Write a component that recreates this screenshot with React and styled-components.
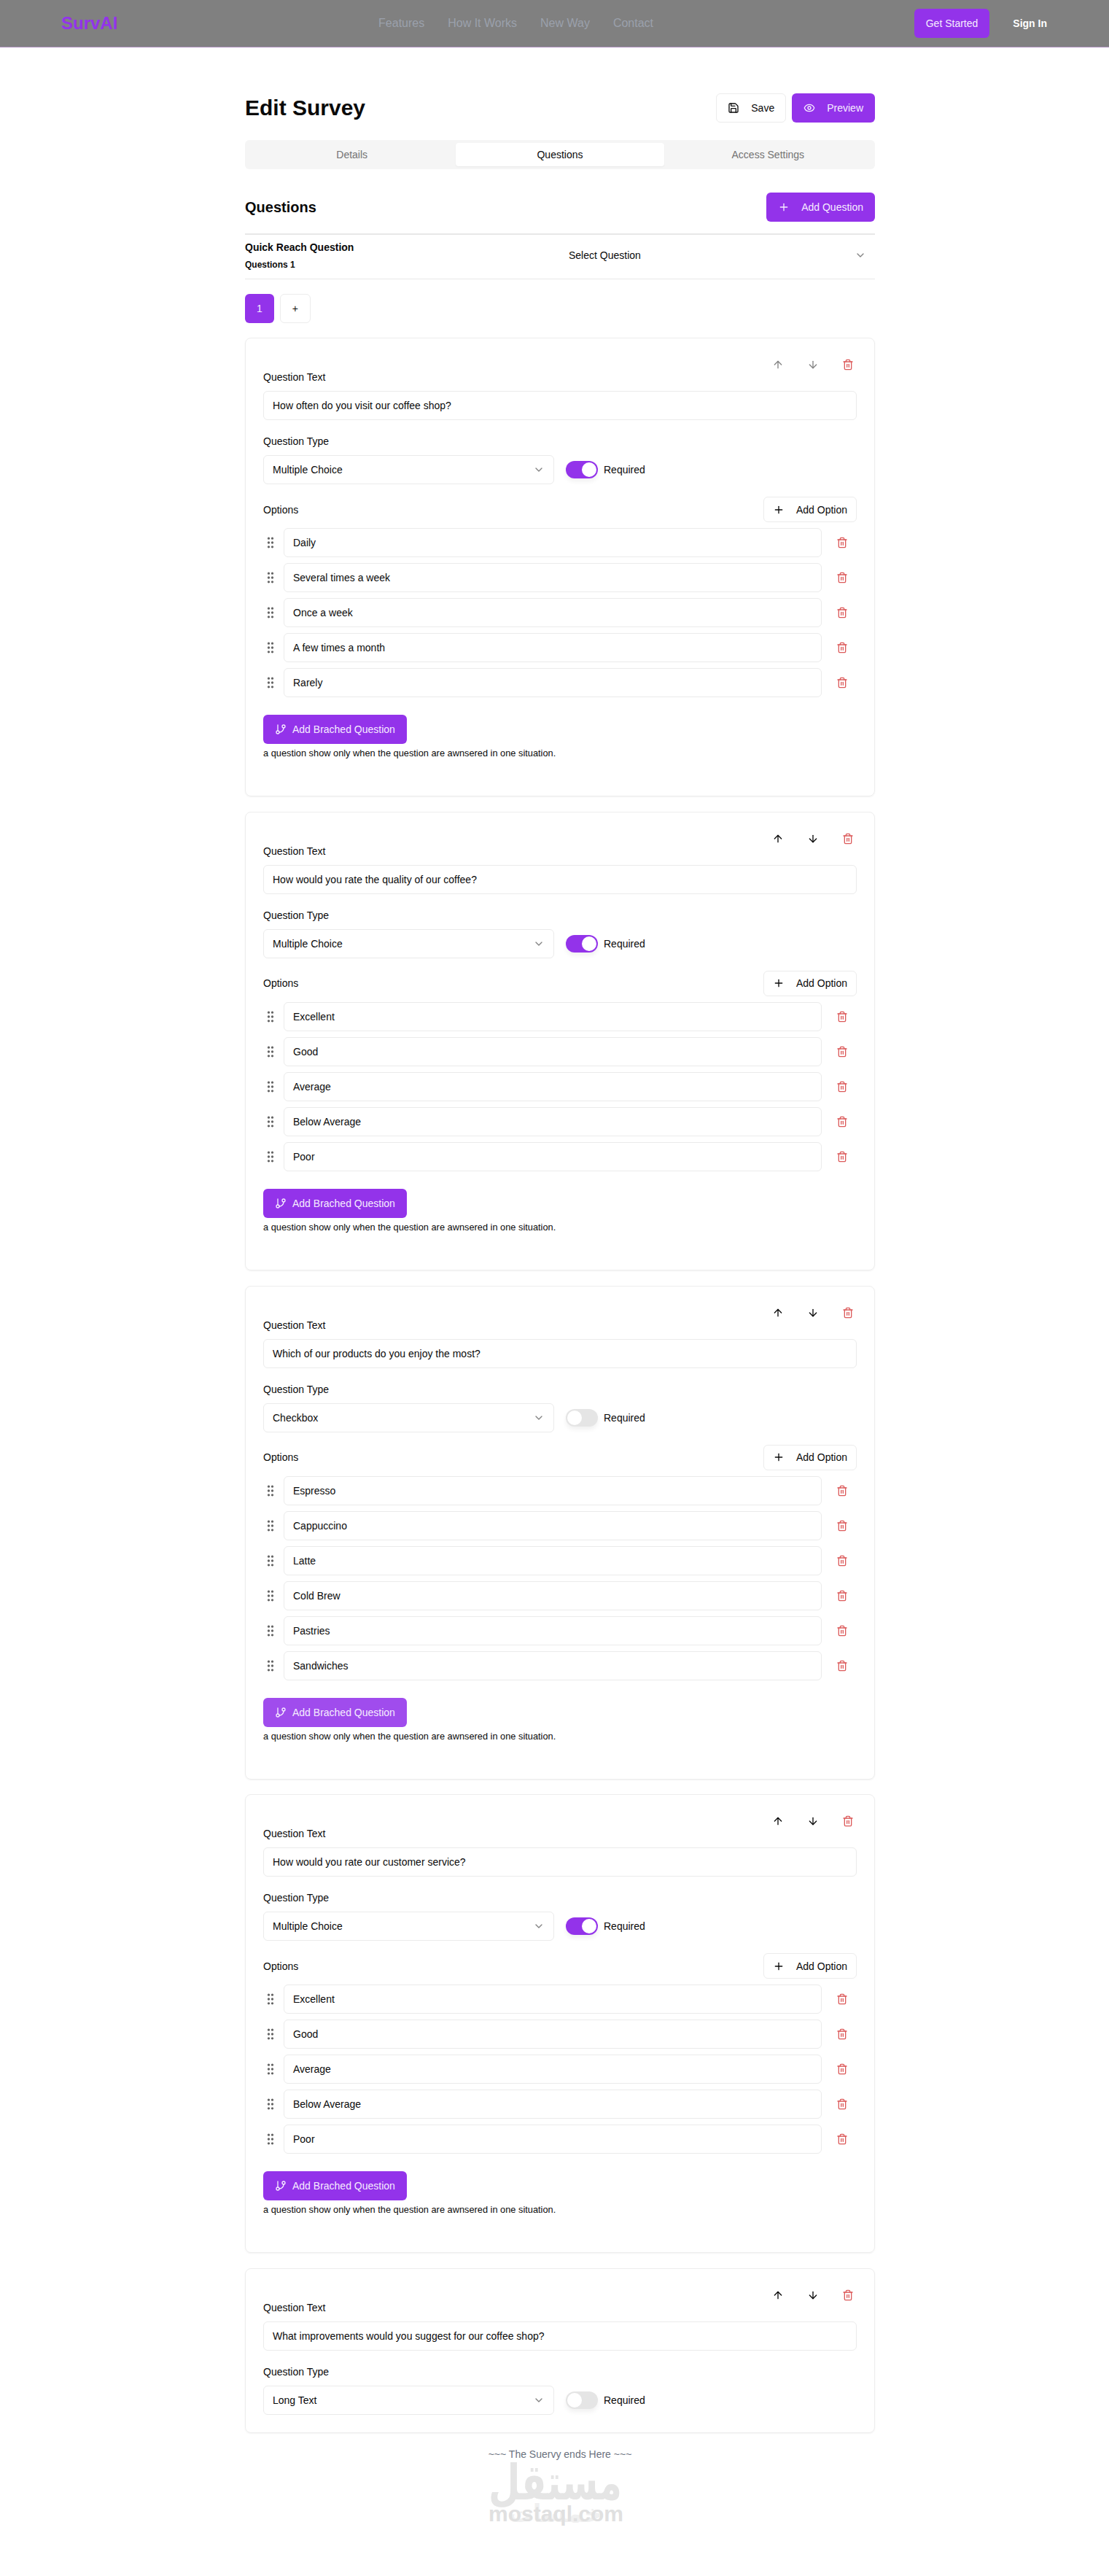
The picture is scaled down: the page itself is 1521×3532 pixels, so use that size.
import React from 'react';
import styled, { createGlobalStyle } from 'styled-components';
import { ArrowUp, ArrowDown, Trash2, ChevronDown, Plus, Save, Eye, GripVertical, GitBranch } from 'lucide-react';

const Global = createGlobalStyle`
  html, body {
    margin: 0;
    padding: 0;
    background: #fff;
    font-family: "Liberation Sans", Arial, sans-serif;
    color: #0a0a0a;
    overflow-x: hidden;
  }
  * { box-sizing: border-box; }
`;

const purple = '#9333ea';
const onPurple = '#f6ecff';

const Header = styled.header`
  height: 65px;
  background: #808080;
  border-bottom: 1px solid #a68fb6;
  box-shadow: 0 1px 0 #fdf4ff;
  display: flex;
  align-items: center;
  justify-content: space-between;
  padding: 0 69px 0 84px;
`;
const Logo = styled.div`
  color: ${purple};
  font-size: 24px;
  font-weight: 700;
`;
const NavLinks = styled.nav`
  display: flex;
  gap: 32px;
`;
const NavLink = styled.a`
  color: #9ba1ac;
  font-size: 16px;
`;
const HeaderActions = styled.div`
  display: flex;
  align-items: center;
  gap: 16px;
`;
const SignIn = styled.a`
  color: #fff;
  font-size: 14px;
  font-weight: 700;
  padding: 0 16px;
`;

const Main = styled.main`
  width: 864px;
  margin-left: 336px;
  padding: 63px 0 157px;
`;
const TitleRow = styled.div`
  display: flex;
  align-items: center;
  justify-content: space-between;
  height: 40px;
`;
const Title = styled.h1`
  margin: 0;
  font-size: 30px;
  line-height: 36px;
  font-weight: 700;
`;
const Buttons = styled.div`
  display: flex;
  gap: 8px;
`;
const Button = styled.button`
  display: inline-flex;
  align-items: center;
  gap: ${p => p.$gap || 16}px;
  height: ${p => p.$height || 40}px;
  padding: 0 ${p => p.$pad || 16}px;
  border-radius: 6px;
  font: 14px "Liberation Sans", Arial, sans-serif;
  white-space: nowrap;
  border: ${p => (p.$outline ? '1px solid #ececec' : '0')};
  background: ${p => (p.$outline ? '#fff' : p.$bg || purple)};
  color: ${p => (p.$outline ? '#0a0a0a' : onPurple)};
`;

const Tabs = styled.div`
  margin-top: 24px;
  height: 40px;
  padding: 4px;
  background: #f5f5f5;
  border-radius: 6px;
  display: grid;
  grid-template-columns: repeat(3, 1fr);
`;
const Tab = styled.div`
  display: flex;
  align-items: center;
  justify-content: center;
  font-size: 14px;
  border-radius: 4px;
  color: ${p => (p.$active ? '#0a0a0a' : '#737373')};
  background: ${p => (p.$active ? '#fff' : 'transparent')};
  box-shadow: ${p => (p.$active ? '0 1px 2px rgba(0,0,0,.05)' : 'none')};
`;

const SectionHead = styled.div`
  margin-top: 32px;
  display: flex;
  align-items: center;
  justify-content: space-between;
`;
const SectionTitle = styled.h2`
  margin: 0;
  font-size: 20px;
  font-weight: 700;
`;

const QuickReach = styled.section`
  margin-top: 16px;
  height: 63px;
  border-top: 2px solid #e8e8e8;
  border-bottom: 1px solid #e8e8e8;
  display: grid;
  grid-template-columns: 1fr 1fr;
  align-items: start;
`;
const QuickName = styled.div`
  margin-top: 7px;
  font-size: 14px;
  line-height: 20px;
  font-weight: 700;
`;
const QuickCount = styled.div`
  margin-top: 6px;
  font-size: 12px;
  line-height: 16px;
  font-weight: 700;
`;
const QuickSelect = styled.div`
  margin-top: 8px;
  height: 40px;
  padding: 0 12px;
  display: flex;
  align-items: center;
  justify-content: space-between;
  font-size: 14px;
`;

const Pager = styled.div`
  margin-top: 20px;
  display: flex;
  gap: 8px;
`;

const Cards = styled.div`
  margin-top: 20px;
  display: flex;
  flex-direction: column;
  gap: 20.75px;
`;
const Card = styled.article`
  position: relative;
  border: 1px solid #ededed;
  border-radius: 8px;
  box-shadow: 0 1px 2px rgba(0, 0, 0, .05);
  padding: 43px 24px 24px;
`;
const CardTools = styled.div`
  position: absolute;
  top: 16px;
  right: 16px;
  display: flex;
  gap: 8px;
`;
const IconButton = styled.span`
  width: 40px;
  height: 40px;
  display: flex;
  align-items: center;
  justify-content: center;
  flex: none;
  color: ${p => p.$color || '#0a0a0a'};
  opacity: ${p => (p.$dim ? 0.5 : 1)};
`;
const Label = styled.div`
  font-size: 14px;
  line-height: 20px;
  margin-bottom: 9px;
`;
const Field = styled.div`
  height: 40px;
  padding: 0 12px;
  display: flex;
  align-items: center;
  justify-content: space-between;
  font-size: 14px;
  background: #fff;
  border: 1px solid #ebebeb;
  border-radius: 6px;
  flex: ${p => (p.$grow ? 1 : 'initial')};
`;
const FaintChevron = styled(ChevronDown)`
  opacity: .5;
`;
const TypeBlock = styled.div`
  margin-top: 19px;
`;
const TypeRow = styled.div`
  display: grid;
  grid-template-columns: 1fr 1fr;
  gap: 16px;
  align-items: center;
`;
const RequiredWrap = styled.div`
  display: flex;
  align-items: center;
  gap: 8px;
  font-size: 14px;
`;
const Toggle = styled.span`
  width: 44px;
  height: 24px;
  padding: 2px;
  border-radius: 12px;
  display: flex;
  justify-content: ${p => (p.$on ? 'flex-end' : 'flex-start')};
  background: ${p => (p.$on ? purple : '#e5e5e5')};
  box-shadow: 0 4px 6px rgba(0, 0, 0, .06);
`;
const Thumb = styled.span`
  width: 20px;
  height: 20px;
  border-radius: 50%;
  background: #fff;
`;
const OptionsHead = styled.div`
  margin-top: 17px;
  height: 35px;
  display: flex;
  align-items: center;
  justify-content: space-between;
  font-size: 14px;
`;
const OptionList = styled.div`
  margin-top: 8px;
  display: flex;
  flex-direction: column;
  gap: 8px;
`;
const OptionRow = styled.div`
  display: flex;
  align-items: center;
  gap: 8px;
`;
const Grip = styled(GripVertical)`
  color: #666;
  flex: none;
`;
const BranchBlock = styled.div`
  margin-top: 24px;
  padding-bottom: 26px;
`;
const Hint = styled.p`
  margin: 5px 0 0;
  font-size: 12.8px;
  line-height: 16px;
`;

const EndBlock = styled.div`
  position: relative;
  margin-top: 19px;
  text-align: center;
  font-size: 14px;
  line-height: 20px;
  color: #6b7280;
`;
const WatermarkArabic = styled.div`
  position: absolute;
  top: 14px;
  left: 334px;
  width: 182px;
  font: 700 50px/70px "DejaVu Sans", sans-serif;
  color: #e5e5e5;
  text-align: center;
  transform: scaleY(1.35);
`;
const WatermarkSecond = styled.div`
  position: absolute;
  top: 70px;
  left: 334px;
  width: 182px;
  font: 700 34px/42px "DejaVu Sans", sans-serif;
  color: #f0f0f0;
  text-align: center;
`;
const WatermarkLatin = styled.div`
  position: absolute;
  top: 73px;
  left: 334px;
  width: 182px;
  font: 700 30px/38px "Liberation Sans", Arial, sans-serif;
  color: #e0e0e0;
  text-align: center;
`;

const questions = [
  { text: 'How often do you visit our coffee shop?', type: 'Multiple Choice', required: true, dim: true,
    options: ['Daily', 'Several times a week', 'Once a week', 'A few times a month', 'Rarely'] },
  { text: 'How would you rate the quality of our coffee?', type: 'Multiple Choice', required: true,
    options: ['Excellent', 'Good', 'Average', 'Below Average', 'Poor'] },
  { text: 'Which of our products do you enjoy the most?', type: 'Checkbox', required: false, soft: true,
    options: ['Espresso', 'Cappuccino', 'Latte', 'Cold Brew', 'Pastries', 'Sandwiches'] },
  { text: 'How would you rate our customer service?', type: 'Multiple Choice', required: true,
    options: ['Excellent', 'Good', 'Average', 'Below Average', 'Poor'] },
  { text: 'What improvements would you suggest for our coffee shop?', type: 'Long Text', required: false },
];

function QuestionCard({ q }) {
  return (
    <Card>
      <CardTools>
        <IconButton $dim={q.dim}><ArrowUp size={16} /></IconButton>
        <IconButton $dim={q.dim}><ArrowDown size={16} /></IconButton>
        <IconButton $color="#dc5a5a"><Trash2 size={16} /></IconButton>
      </CardTools>
      <Label>Question Text</Label>
      <Field>{q.text}</Field>
      <TypeBlock>
        <Label>Question Type</Label>
        <TypeRow>
          <Field>{q.type}<FaintChevron size={16} /></Field>
          <RequiredWrap>
            <Toggle $on={q.required}><Thumb /></Toggle>
            Required
          </RequiredWrap>
        </TypeRow>
      </TypeBlock>
      {q.options && (
        <>
          <OptionsHead>
            Options
            <Button $outline $height={35} $pad={12}><Plus size={16} />Add Option</Button>
          </OptionsHead>
          <OptionList>
            {q.options.map(o => (
              <OptionRow key={o}>
                <Grip size={20} />
                <Field $grow>{o}</Field>
                <IconButton $color="#dc5a5a"><Trash2 size={16} /></IconButton>
              </OptionRow>
            ))}
          </OptionList>
          <BranchBlock>
            <Button $gap={8} $bg={q.soft ? '#a04ced' : purple}><GitBranch size={16} />Add Brached Question</Button>
            <Hint>a question show only when the question are awnsered in one situation.</Hint>
          </BranchBlock>
        </>
      )}
    </Card>
  );
}

export default function App() {
  return (
    <>
      <Global />
      <Header>
        <Logo>SurvAI</Logo>
        <NavLinks>
          <NavLink>Features</NavLink>
          <NavLink>How It Works</NavLink>
          <NavLink>New Way</NavLink>
          <NavLink>Contact</NavLink>
        </NavLinks>
        <HeaderActions>
          <Button>Get Started</Button>
          <SignIn>Sign In</SignIn>
        </HeaderActions>
      </Header>
      <Main>
        <TitleRow>
          <Title>Edit Survey</Title>
          <Buttons>
            <Button $outline $pad={15}><Save size={16} />Save</Button>
            <Button><Eye size={16} />Preview</Button>
          </Buttons>
        </TitleRow>
        <Tabs>
          <Tab>Details</Tab>
          <Tab $active>Questions</Tab>
          <Tab>Access Settings</Tab>
        </Tabs>
        <SectionHead>
          <SectionTitle>Questions</SectionTitle>
          <Button><Plus size={16} />Add Question</Button>
        </SectionHead>
        <QuickReach>
          <div>
            <QuickName>Quick Reach Question</QuickName>
            <QuickCount>Questions 1</QuickCount>
          </div>
          <QuickSelect>Select Question<FaintChevron size={16} /></QuickSelect>
        </QuickReach>
        <Pager>
          <Button>1</Button>
          <Button $outline>+</Button>
        </Pager>
        <Cards>
          {questions.map(q => <QuestionCard key={q.text} q={q} />)}
        </Cards>
        <EndBlock>
          ~~~ The Suervy ends Here ~~~
          <WatermarkArabic>مستقل</WatermarkArabic>
          <WatermarkSecond>خمسات</WatermarkSecond>
          <WatermarkLatin>mostaql.com</WatermarkLatin>
        </EndBlock>
      </Main>
    </>
  );
}
